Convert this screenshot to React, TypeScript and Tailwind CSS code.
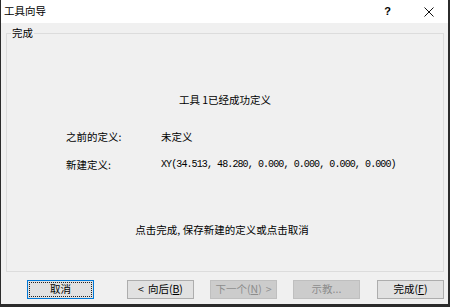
import React from "react";

const cjk = "font-['SimSun','Noto_Sans_CJK_SC',sans-serif]";

function WizButton({
  label,
  hotkey,
  before,
  after,
  disabled,
  focused,
}: {
  label: string;
  hotkey?: string;
  before?: string;
  after?: string;
  disabled?: boolean;
  focused?: boolean;
}) {
  let cls =
    "flex h-[19px] w-[67px] items-center justify-center border text-[10.5px] leading-none";
  if (disabled) cls += " border-[#bfbfbf] bg-[#cccccc] text-[#8d8d8d]";
  else if (focused) cls += " border-[#0078d7] bg-[#e1e1e1] text-black";
  else cls += " border-[#adadad] bg-[#e1e1e1] text-black";

  return (
    <div className={cls}>
      <span
        className={
          focused
            ? "flex h-[15px] w-[63px] items-center justify-center border border-dotted border-[#222]"
            : "flex items-center"
        }
      >
        {before && <span className="mr-[4px]">{before}</span>}
        {label}
        {hotkey && (
          <span>
            (<span className="underline underline-offset-1">{hotkey}</span>)
          </span>
        )}
        {after && <span className="ml-[4px]">{after}</span>}
      </span>
    </div>
  );
}

export default function App() {
  return (
    <div
      className={`flex h-[307px] w-[450px] flex-col border-b-[3px] border-l border-r-2 border-[#2b2b2b] bg-[#f0f0f0] text-black ${cjk}`}
    >
      {/* title bar */}
      <div className="flex h-[23px] shrink-0 items-center bg-white pl-[3px]">
        <span className="text-[10.5px] leading-none">工具向导</span>
        <span className="ml-auto font-['Liberation_Sans',sans-serif] text-[11px] font-bold leading-none">
          ?
        </span>
        <svg
          className="ml-[33px] mr-[14px]"
          width="10"
          height="10"
          viewBox="0 0 10 10"
        >
          <path d="M0.5 0.5L9.5 9.5M9.5 0.5L0.5 9.5" stroke="#111" strokeWidth="1" />
        </svg>
      </div>

      <div className="flex flex-1 flex-col pl-[5px] pr-[4px]">
        {/* group box */}
        <div className="relative mt-[10px] flex h-[239px] flex-col border border-[#dcdcdc]">
          <span className="absolute left-[4px] top-[-7px] bg-[#f0f0f0] px-[1px] text-[10.5px] leading-[12px]">
            完成
          </span>

          <div className="pt-[60px] text-center text-[10.5px] leading-[12px]">
            工具 1已经成功定义
          </div>

          <div className="mt-[25px] flex pl-[59px] text-[10.5px] leading-[12px]">
            <span className="w-[95px]">之前的定义:</span>
            <span>未定义</span>
          </div>

          <div className="mt-[16px] flex pl-[59px] text-[10.5px] leading-[12px]">
            <span className="w-[95px]">新建定义:</span>
            <span className="font-['Liberation_Mono',monospace] text-[10px] tracking-[-0.9px]">
              XY(34.513, 48.280, 0.000, 0.000, 0.000, 0.000)
            </span>
          </div>

          <div className="mt-[53px] pr-[6px] text-center text-[10.5px] leading-[12px]">
            点击完成, 保存新建的定义或点击取消
          </div>
        </div>

        {/* buttons */}
        <div className="mt-[8px] flex">
          <div className="ml-[21px]">
            <WizButton label="取消" focused />
          </div>
          <div className="ml-[33px]">
            <WizButton label="向后" hotkey="B" before="<" />
          </div>
          <div className="ml-[16px]">
            <WizButton label="下一个" hotkey="N" after=">" disabled />
          </div>
          <div className="ml-[16px]">
            <WizButton label="示教..." disabled />
          </div>
          <div className="ml-[17px]">
            <WizButton label="完成" hotkey="F" />
          </div>
        </div>
      </div>
    </div>
  );
}
